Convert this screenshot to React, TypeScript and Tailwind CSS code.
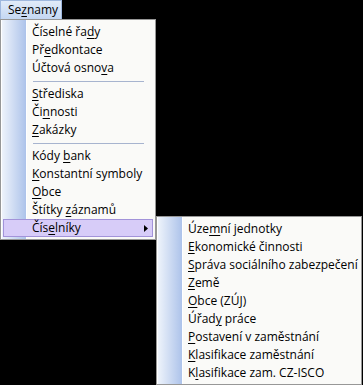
import React from "react";

type Item = { pre: string; u: string; post: string; sub?: boolean; hl?: boolean } | "sep";

const mainItems: Item[] = [
  { pre: "Číselné řa", u: "d", post: "y" },
  { pre: "Př", u: "e", post: "dkontace" },
  { pre: "Účtová osno", u: "v", post: "a" },
  "sep",
  { pre: "", u: "S", post: "třediska" },
  { pre: "Či", u: "n", post: "nosti" },
  { pre: "", u: "Z", post: "akázky" },
  "sep",
  { pre: "Kódy ", u: "b", post: "ank" },
  { pre: "", u: "K", post: "onstantní symboly" },
  { pre: "", u: "O", post: "bce" },
  { pre: "Štítky ", u: "z", post: "áznamů" },
  { pre: "Čís", u: "e", post: "lníky", sub: true, hl: true },
];

const subItems: Item[] = [
  { pre: "Úze", u: "m", post: "ní jednotky" },
  { pre: "", u: "E", post: "konomické činnosti" },
  { pre: "", u: "S", post: "práva sociálního zabezpečení" },
  { pre: "", u: "Z", post: "emě" },
  { pre: "", u: "O", post: "bce (ZÚJ)" },
  { pre: "Úřad", u: "y", post: " práce" },
  { pre: "", u: "P", post: "ostavení v zaměstnání" },
  { pre: "", u: "K", post: "lasifikace zaměstnání" },
  { pre: "K", u: "l", post: "asifikace zam. CZ-ISCO" },
];

function MenuList({ items }: { items: Item[] }) {
  return (
    <div className="flex flex-col border border-[#979797] pt-[3px] pb-[2px] bg-[linear-gradient(to_right,#ffffff_0px,#ffffff_1px,#eef3fb_1px,#adc3ea_25px,#ffffff_25px,#ffffff_26px,#fafaf8_26px)]">
      {items.map((it, i) =>
        it === "sep" ? (
          <div key={i} className="h-[8px] flex items-center pl-[32px] pr-[11px]">
            <div className="h-px w-full bg-[#a7b4cf]" />
          </div>
        ) : (
          <div
            key={i}
            className={
              "relative mx-[2px] h-[18px] flex items-center pl-[28px] border " +
              (it.hl ? "bg-[#d7ccf8] border-[#a293d9]" : "border-transparent")
            }
          >
            <span className="whitespace-nowrap leading-none">
              {it.pre}
              <span className="underline underline-offset-2 decoration-1">{it.u}</span>
              {it.post}
            </span>
            {it.sub && (
              <svg className="absolute right-[4px] top-[5px]" width="4" height="7" viewBox="0 0 4 7">
                <path d="M0 0 L4 3.5 L0 7 Z" fill="#000" />
              </svg>
            )}
          </div>
        )
      )}
    </div>
  );
}

export default function App() {
  return (
    <div
      className="relative w-[363px] h-[385px] bg-black overflow-hidden text-[12px] text-black"
      style={{ fontFamily: '"Open Sans", "Liberation Sans", Arial, sans-serif' }}
    >
      <div className="flex">
        <div className="h-[20px] w-[62px] flex items-center pl-[7px] border border-[#9fb8de] bg-[linear-gradient(#e1ebf9,#c4d7f2)]">
          <span className="leading-none">
            Se<span className="underline underline-offset-2 decoration-1">z</span>namy
          </span>
        </div>
      </div>
      <div className="absolute left-0 top-[19px] w-[156px]">
        <MenuList items={mainItems} />
      </div>
      <div className="absolute left-[156px] top-[216px] w-[206px]">
        <MenuList items={subItems} />
      </div>
    </div>
  );
}
